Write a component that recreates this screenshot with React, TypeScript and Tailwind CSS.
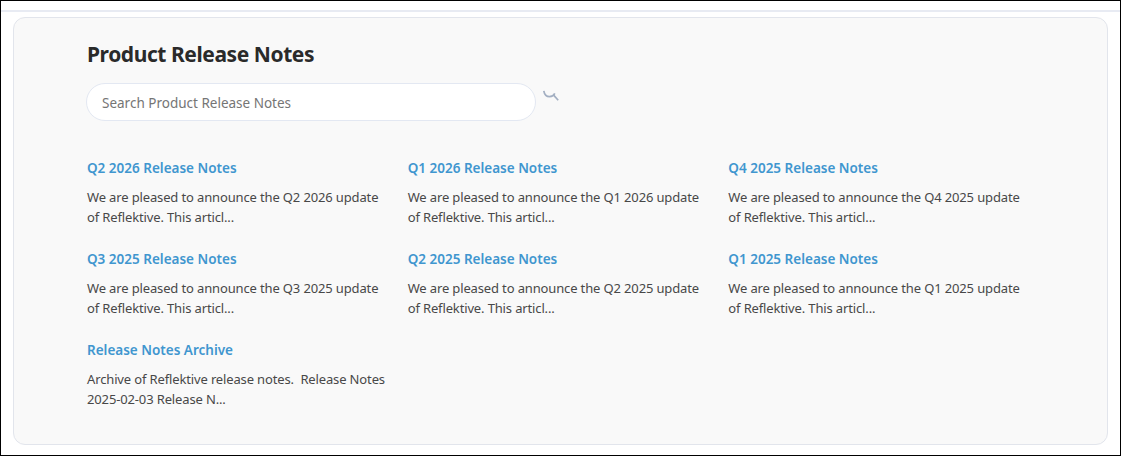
const notes = [
  { title: 'Q2 2026 Release Notes', body: 'We are pleased to announce the Q2 2026 update of Reflektive. This articl...' },
  { title: 'Q1 2026 Release Notes', body: 'We are pleased to announce the Q1 2026 update of Reflektive. This articl...' },
  { title: 'Q4 2025 Release Notes', body: 'We are pleased to announce the Q4 2025 update of Reflektive. This articl...' },
  { title: 'Q3 2025 Release Notes', body: 'We are pleased to announce the Q3 2025 update of Reflektive. This articl...' },
  { title: 'Q2 2025 Release Notes', body: 'We are pleased to announce the Q2 2025 update of Reflektive. This articl...' },
  { title: 'Q1 2025 Release Notes', body: 'We are pleased to announce the Q1 2025 update of Reflektive. This articl...' },
  { title: 'Release Notes Archive', body: 'Archive of Reflektive release notes.  Release Notes 2025-02-03 Release N...' },
];

export default function App() {
  return (
    <div className="h-[456px] w-[1121px] overflow-hidden border border-black bg-white font-['Noto_Sans',sans-serif]">
      {/* Top rule */}
      <div className="mt-[9px] h-[2px] bg-[#e8ebf3]" />

      {/* Card */}
      <div className="mx-3 mt-[5px] h-[428px] rounded-xl border border-[#e2e5ec] bg-[#f9f9f9] pl-[72px] pt-[21px]">
        <h1 className="pl-px text-[21px] font-bold leading-[30px] tracking-[-0.43px] text-[#2a2a2a]">Product Release Notes</h1>

        <div className="mt-[14px] flex items-start">
          <input
            readOnly
            placeholder="Search Product Release Notes"
            className="h-[38px] w-[450px] rounded-full border border-[#e3e8f2] bg-white px-[15px] pt-px text-[13.5px] text-[#555] outline-none placeholder:text-[#757575]"
          />
          <svg className="ml-[7px] mt-[6px]" width="16" height="13" viewBox="0 0 16 13" fill="none" stroke="#a3afc2" strokeWidth="1.7">
            <path d="M.8 1.8C1.4 5.6 3.8 7.6 6.6 7.6c2.4 0 4.2-1 5.2-3.2" />
            <path d="M10.2 5.6l5 5.6" />
          </svg>
        </div>

        <div className="mt-[32px] grid w-[963px] grid-cols-3 pl-px">
          {notes.map((note) => (
            <div key={note.title} className="h-[91px] w-[300px]">
              <a href="#" className="block text-[13.5px] font-semibold leading-[30px] text-[#4096cf]">{note.title}</a>
              <p className="mt-[4px] whitespace-pre-wrap text-[13px] leading-[20px] tracking-[-0.14px] text-[#484848]">{note.body}</p>
            </div>
          ))}
        </div>
      </div>
    </div>
  );
}
